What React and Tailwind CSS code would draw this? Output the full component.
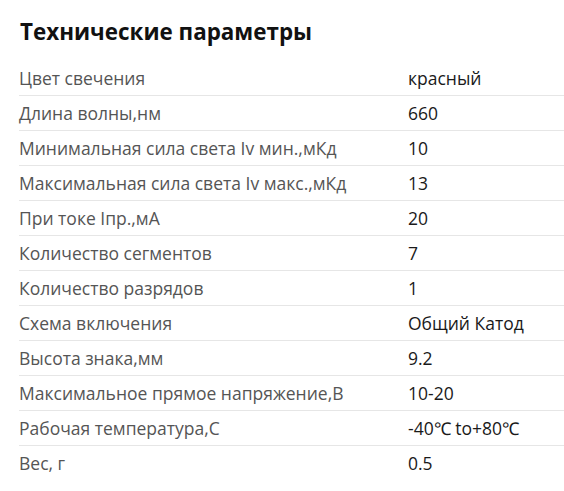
import React from "react";

const rows = [
  ["Цвет свечения", "красный"],
  ["Длина волны,нм", "660"],
  ["Минимальная сила света Iv мин.,мКд", "10"],
  ["Максимальная сила света Iv макс.,мКд", "13"],
  ["При токе Iпр.,мА", "20"],
  ["Количество сегментов", "7"],
  ["Количество разрядов", "1"],
  ["Схема включения", "Общий Катод"],
  ["Высота знака,мм", "9.2"],
  ["Максимальное прямое напряжение,В", "10-20"],
  ["Рабочая температура,С", "-40℃ to+80℃"],
  ["Вес, г", "0.5"],
];

export default function App() {
  return (
    <div className="bg-white w-[564px] h-[491px] overflow-hidden pl-[19px]" style={{ fontFamily: '"Open Sans", sans-serif' }}>
      <h2 className="text-[22.4px] font-bold text-[#111] leading-[30px] pt-[17px] pb-[14px] pl-[1px]">Технические параметры</h2>
      <div>
        {rows.map(([k, v], i) => (
          <div
            key={i}
            className={`flex items-center h-[35px] text-[17.5px] ${i < rows.length - 1 ? "border-b border-[#e6e6e6]" : ""}`}
          >
            <div className="w-[389px] text-[#555]">{k}</div>
            <div className="text-[#1a1a1a]">{v}</div>
          </div>
        ))}
      </div>
    </div>
  );
}
